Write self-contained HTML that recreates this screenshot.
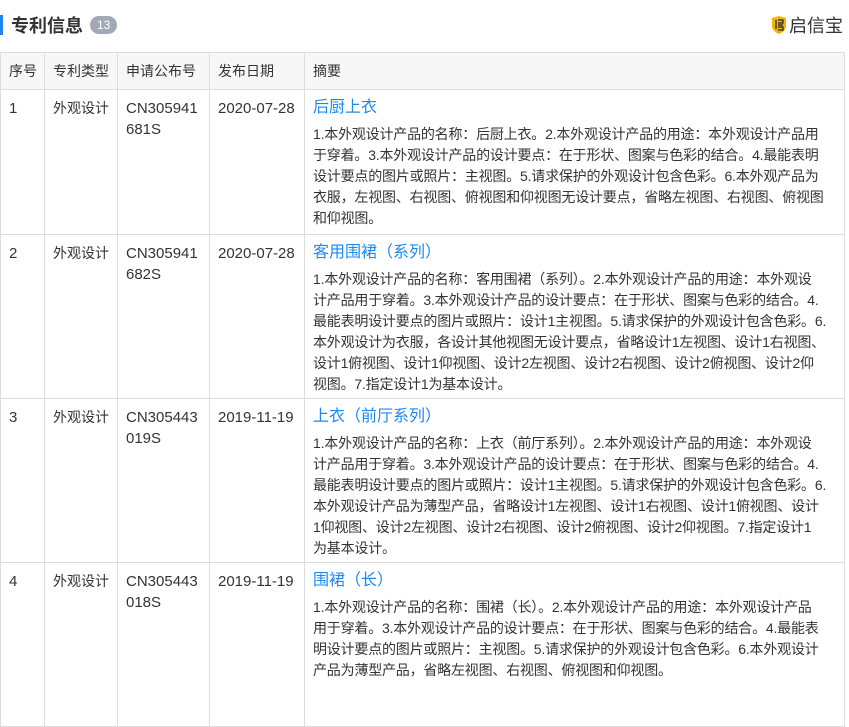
<!DOCTYPE html>
<html><head><meta charset="utf-8"><style>
*{margin:0;padding:0;box-sizing:border-box}
body{width:849px;height:686px;overflow:hidden;background:#fff;font-family:"Liberation Sans","Noto Sans CJK SC",sans-serif;color:#333;position:relative}
.hd{position:absolute;left:0;top:12px;height:26px;display:flex;align-items:center}
.bar{width:3px;height:20px;background:#1e88f0;margin-right:8px}
.ht{font-size:18px;font-weight:bold;color:#333}
.badge{margin-left:7px;background:#a3a8b6;color:#fff;font-size:12px;border-radius:9px;height:18px;line-height:18px;padding:0 7px}
.logo{position:absolute;right:6px;top:12px;display:flex;align-items:center;font-size:18px;color:#333}
table{position:absolute;left:0;top:52px;border-collapse:collapse;table-layout:fixed;width:844px}
td,th{border:1px solid #ddd;vertical-align:top;font-size:14px;font-weight:normal;text-align:left;padding:8px 8px 0 8px;line-height:21px;white-space:nowrap;overflow:hidden}
td.l{font-size:15px}
th{background:#f7f7f7;height:37px;padding-top:8px}
td{color:#333}
.t{font-size:16px;color:#1e88f0;line-height:24px;margin-top:-2px;margin-bottom:4px}
.s{font-size:14px;line-height:21px;white-space:nowrap;letter-spacing:-0.2px}
</style></head><body>
<div class="hd"><div class="bar"></div><span class="ht">专利信息</span><span class="badge">13</span></div>
<div class="logo"><svg width="16" height="20" viewBox="0 0 16 20"><path d="M8 1 L15 3 V11 C15 15 11 18 8 19 C5 18 1 15 1 11 V3 Z" fill="#f5b400"/><path d="M5 5v9M7 5h5v3H7M7 10h5M7 12h5v3H7" stroke="#222" stroke-width="1.2" fill="none"/></svg><span style="margin-left:2px">启信宝</span></div>
<table>
<colgroup><col style="width:44px"><col style="width:73px"><col style="width:92px"><col style="width:95px"><col style="width:540px"></colgroup>
<tr><th>序号</th><th>专利类型</th><th>申请公布号</th><th>发布日期</th><th>摘要</th></tr>
<tr style="height:145px"><td class="l">1</td><td>外观设计</td><td class="l">CN305941<br>681S</td><td class="l">2020-07-28</td><td><div class="t">后厨上衣</div><div class="s">1.本外观设计产品的名称：后厨上衣。2.本外观设计产品的用途：本外观设计产品用<br>于穿着。3.本外观设计产品的设计要点：在于形状、图案与色彩的结合。4.最能表明<br>设计要点的图片或照片：主视图。5.请求保护的外观设计包含色彩。6.本外观产品为<br>衣服，左视图、右视图、俯视图和仰视图无设计要点，省略左视图、右视图、俯视图<br>和仰视图。</div></td></tr>
<tr style="height:164px"><td class="l">2</td><td>外观设计</td><td class="l">CN305941<br>682S</td><td class="l">2020-07-28</td><td><div class="t">客用围裙（系列）</div><div class="s">1.本外观设计产品的名称：客用围裙（系列）。2.本外观设计产品的用途：本外观设<br>计产品用于穿着。3.本外观设计产品的设计要点：在于形状、图案与色彩的结合。4.<br>最能表明设计要点的图片或照片：设计1主视图。5.请求保护的外观设计包含色彩。6.<br>本外观设计为衣服，各设计其他视图无设计要点，省略设计1左视图、设计1右视图、<br>设计1俯视图、设计1仰视图、设计2左视图、设计2右视图、设计2俯视图、设计2仰<br>视图。7.指定设计1为基本设计。</div></td></tr>
<tr style="height:164px"><td class="l">3</td><td>外观设计</td><td class="l">CN305443<br>019S</td><td class="l">2019-11-19</td><td><div class="t">上衣（前厅系列）</div><div class="s">1.本外观设计产品的名称：上衣（前厅系列）。2.本外观设计产品的用途：本外观设<br>计产品用于穿着。3.本外观设计产品的设计要点：在于形状、图案与色彩的结合。4.<br>最能表明设计要点的图片或照片：设计1主视图。5.请求保护的外观设计包含色彩。6.<br>本外观设计产品为薄型产品，省略设计1左视图、设计1右视图、设计1俯视图、设计<br>1仰视图、设计2左视图、设计2右视图、设计2俯视图、设计2仰视图。7.指定设计1<br>为基本设计。</div></td></tr>
<tr style="height:164px"><td class="l">4</td><td>外观设计</td><td class="l">CN305443<br>018S</td><td class="l">2019-11-19</td><td><div class="t">围裙（长）</div><div class="s">1.本外观设计产品的名称：围裙（长）。2.本外观设计产品的用途：本外观设计产品<br>用于穿着。3.本外观设计产品的设计要点：在于形状、图案与色彩的结合。4.最能表<br>明设计要点的图片或照片：主视图。5.请求保护的外观设计包含色彩。6.本外观设计<br>产品为薄型产品，省略左视图、右视图、俯视图和仰视图。</div></td></tr>
</table>
</body></html>
